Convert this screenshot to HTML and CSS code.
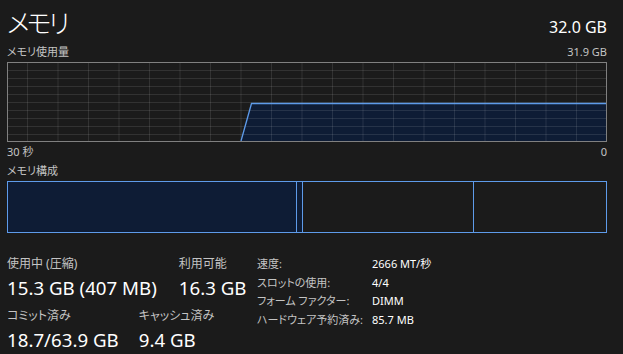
FILE: index.html
```html
<!DOCTYPE html>
<html lang="ja">
<head>
<meta charset="utf-8">
<title>メモリ</title>
<link rel="stylesheet" href="styles.css">
</head>
<body>
<div class="panel">
  <div class="header">
    <div class="title">メモリ</div>
    <div class="total">32.0 GB</div>
  </div>
  <div class="axis-row top">
    <span>メモリ使用量</span>
    <span>31.9 GB</span>
  </div>
  <svg class="graph" width="600" height="80" viewBox="0 0 600 80">
    <path class="area" d="M234 79 L244.5 41.5 L600 41.5 L600 79 Z"/>
    <g class="grid">
      <line x1="20.5" y1="0" x2="20.5" y2="80"/>
      <line x1="51" y1="0" x2="51" y2="80"/>
      <line x1="81.5" y1="0" x2="81.5" y2="80"/>
      <line x1="112" y1="0" x2="112" y2="80"/>
      <line x1="142.5" y1="0" x2="142.5" y2="80"/>
      <line x1="173" y1="0" x2="173" y2="80"/>
      <line x1="203.5" y1="0" x2="203.5" y2="80"/>
      <line x1="234" y1="0" x2="234" y2="80"/>
      <line x1="264.5" y1="0" x2="264.5" y2="80"/>
      <line x1="295" y1="0" x2="295" y2="80"/>
      <line x1="325.5" y1="0" x2="325.5" y2="80"/>
      <line x1="356" y1="0" x2="356" y2="80"/>
      <line x1="386.5" y1="0" x2="386.5" y2="80"/>
      <line x1="417" y1="0" x2="417" y2="80"/>
      <line x1="447.5" y1="0" x2="447.5" y2="80"/>
      <line x1="478" y1="0" x2="478" y2="80"/>
      <line x1="508.5" y1="0" x2="508.5" y2="80"/>
      <line x1="539" y1="0" x2="539" y2="80"/>
      <line x1="569.5" y1="0" x2="569.5" y2="80"/>
      <line x1="0" y1="8.5" x2="600" y2="8.5"/>
      <line x1="0" y1="16.5" x2="600" y2="16.5"/>
      <line x1="0" y1="24.5" x2="600" y2="24.5"/>
      <line x1="0" y1="32.5" x2="600" y2="32.5"/>
      <line x1="0" y1="40.5" x2="600" y2="40.5"/>
      <line x1="0" y1="48.5" x2="600" y2="48.5"/>
      <line x1="0" y1="56.5" x2="600" y2="56.5"/>
      <line x1="0" y1="64.5" x2="600" y2="64.5"/>
      <line x1="0" y1="72.5" x2="600" y2="72.5"/>
    </g>
    <polyline class="usage" points="234,79 244.5,41.5 600,41.5"/>
    <rect class="frame" x="0.5" y="0.5" width="599" height="79"/>
  </svg>
  <div class="axis-row bottom">
    <span>30 秒</span>
    <span>0</span>
  </div>
  <div class="section-label">メモリ構成</div>
  <div class="composition">
    <div class="seg inuse"></div>
    <div class="seg modified"></div>
    <div class="seg standby"></div>
    <div class="seg free"></div>
  </div>
  <div class="stats">
    <div class="stats-left">
      <div class="stat-row first">
        <div class="stat">
          <div class="stat-label">使用中 (圧縮)</div>
          <div class="stat-value">15.3 GB (407 MB)</div>
        </div>
        <div class="stat">
          <div class="stat-label">利用可能</div>
          <div class="stat-value">16.3 GB</div>
        </div>
      </div>
      <div class="stat-row second">
        <div class="stat">
          <div class="stat-label">コミット済み</div>
          <div class="stat-value">18.7/63.9 GB</div>
        </div>
        <div class="stat">
          <div class="stat-label">キャッシュ済み</div>
          <div class="stat-value">9.4 GB</div>
        </div>
      </div>
    </div>
    <div class="props">
      <div class="prop-label">速度:</div><div class="prop-value">2666 MT/秒</div>
      <div class="prop-label">スロットの使用:</div><div class="prop-value">4/4</div>
      <div class="prop-label">フォーム ファクター:</div><div class="prop-value">DIMM</div>
      <div class="prop-label">ハードウェア予約済み:</div><div class="prop-value">85.7 MB</div>
    </div>
  </div>
</div>
</body>
</html>
```

FILE: styles.css
```css
html, body {
  margin: 0;
  padding: 0;
  background: #1b1b1b;
}

body {
  width: 623px;
  height: 354px;
  overflow: hidden;
  font-family: "Noto Sans", "Noto Sans CJK JP", sans-serif;
  font-feature-settings: "palt";
  color: #ffffff;
}

.panel {
  padding: 0 16px 0 7px;
}

.header {
  display: flex;
  justify-content: space-between;
  align-items: baseline;
  height: 41px;
  padding-top: 3px;
}

.title {
  font-size: 26px;
  line-height: 41px;
  letter-spacing: -3px;
  font-weight: 300;
  color: #ffffff;
}

.total {
  font-size: 16px;
  color: #ffffff;
}

.axis-row {
  display: flex;
  justify-content: space-between;
  font-size: 11px;
  color: #c4c4c4;
}

.axis-row.top {
  height: 18px;
  line-height: 16px;
}

.axis-row.bottom {
  height: 17px;
  line-height: 20px;
}

.graph {
  display: block;
}

.graph .area {
  fill: #0e1c35;
}

.graph .grid line {
  stroke: rgba(255, 255, 255, 0.1);
  stroke-width: 1;
}

.graph .usage {
  fill: none;
  stroke: #5e9bea;
  stroke-width: 1.3;
}

.graph .frame {
  fill: none;
  stroke: #808080;
  stroke-width: 1;
}

.section-label {
  font-size: 11px;
  color: #c4c4c4;
  height: 22px;
  line-height: 24px;
}

.composition {
  display: flex;
  height: 50px;
  border: 1px solid #5e9bea;
}

.seg {
  height: 100%;
}

.seg.inuse {
  width: 288px;
  background: #0e1c35;
}

.seg.modified {
  width: 5px;
  border-left: 1px solid #5e9bea;
  background: #0e1c35;
}

.seg.standby {
  width: 170px;
  border-left: 1px solid #5e9bea;
}

.seg.free {
  flex: 1;
  border-left: 1px solid #5e9bea;
}

.stats {
  display: flex;
  margin-top: 23px;
}

.stats-left {
  width: 250px;
}

.stat-row {
  display: flex;
}

.stat-row.first {
  gap: 22px;
  height: 52px;
}

.stat-row.second {
  gap: 20px;
}

.stat-label {
  font-size: 12px;
  line-height: 16px;
  color: #c4c4c4;
}

.stat-value {
  font-size: 18.7px;
  line-height: 26px;
  margin-top: 3px;
  color: #ffffff;
}

.props {
  display: grid;
  grid-template-columns: 115px auto;
  grid-auto-rows: 18.5px;
  font-size: 11px;
  line-height: 16px;
}

.prop-label {
  color: #c4c4c4;
}

.prop-value {
  color: #ffffff;
}
```
